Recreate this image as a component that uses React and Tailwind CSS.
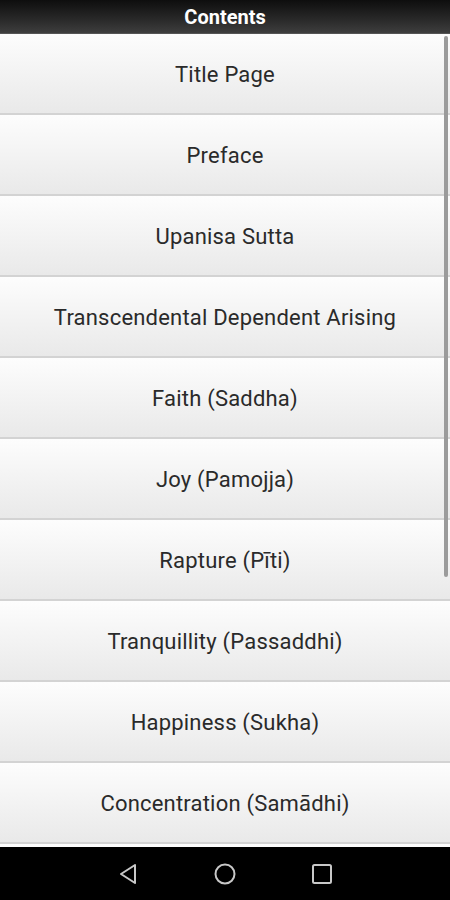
import React from "react";

const items = [
  "Title Page",
  "Preface",
  "Upanisa Sutta",
  "Transcendental Dependent Arising",
  "Faith (Saddha)",
  "Joy (Pamojja)",
  "Rapture (Pīti)",
  "Tranquillity (Passaddhi)",
  "Happiness (Sukha)",
  "Concentration (Samādhi)",
];

export default function App() {
  return (
    <div className="w-[450px] h-[900px] flex flex-col overflow-hidden bg-white" style={{ fontFamily: "Roboto, 'Noto Sans', sans-serif" }}>
      <div className="h-[34px] shrink-0 flex items-center justify-center bg-gradient-to-b from-[#0e0e0e] to-[#3e3e3e] border-b border-[#555]">
        <span className="text-white font-bold text-[20px] leading-none">Contents</span>
      </div>
      <div className="relative flex-1 overflow-hidden">
        <div className="flex flex-col">
          {items.map((t) => (
            <div
              key={t}
              className="h-[81px] shrink-0 flex items-center justify-center pt-[3px] bg-gradient-to-b from-[#fdfdfd] to-[#e9e9e9] border-b-2 border-[#d3d3d3]"
            >
              <span className="text-[22px] leading-none tracking-[0.2px] text-[#2a2a2a]">{t}</span>
            </div>
          ))}
          <div className="h-[81px] shrink-0 bg-gradient-to-b from-[#fdfdfd] to-[#e9e9e9]" />
        </div>
        <div className="absolute right-[2px] top-[2px] w-[4px] h-[541px] rounded-full bg-[#9b9b9b]" />
      </div>
      <div className="h-[53px] shrink-0 bg-black flex items-center justify-center">
        <div className="flex items-center gap-[76px]">
          <svg width="20" height="22" viewBox="0 0 20 22" fill="none">
            <path d="M17 2 L3 11 L17 20 Z" stroke="#c8c8c8" strokeWidth="2" strokeLinejoin="round" />
          </svg>
          <svg width="22" height="22" viewBox="0 0 22 22" fill="none">
            <circle cx="11" cy="11" r="9.5" stroke="#c8c8c8" strokeWidth="2" />
          </svg>
          <svg width="20" height="20" viewBox="0 0 20 20" fill="none">
            <rect x="1" y="1" width="18" height="18" rx="1.5" stroke="#c8c8c8" strokeWidth="2" />
          </svg>
        </div>
      </div>
    </div>
  );
}
